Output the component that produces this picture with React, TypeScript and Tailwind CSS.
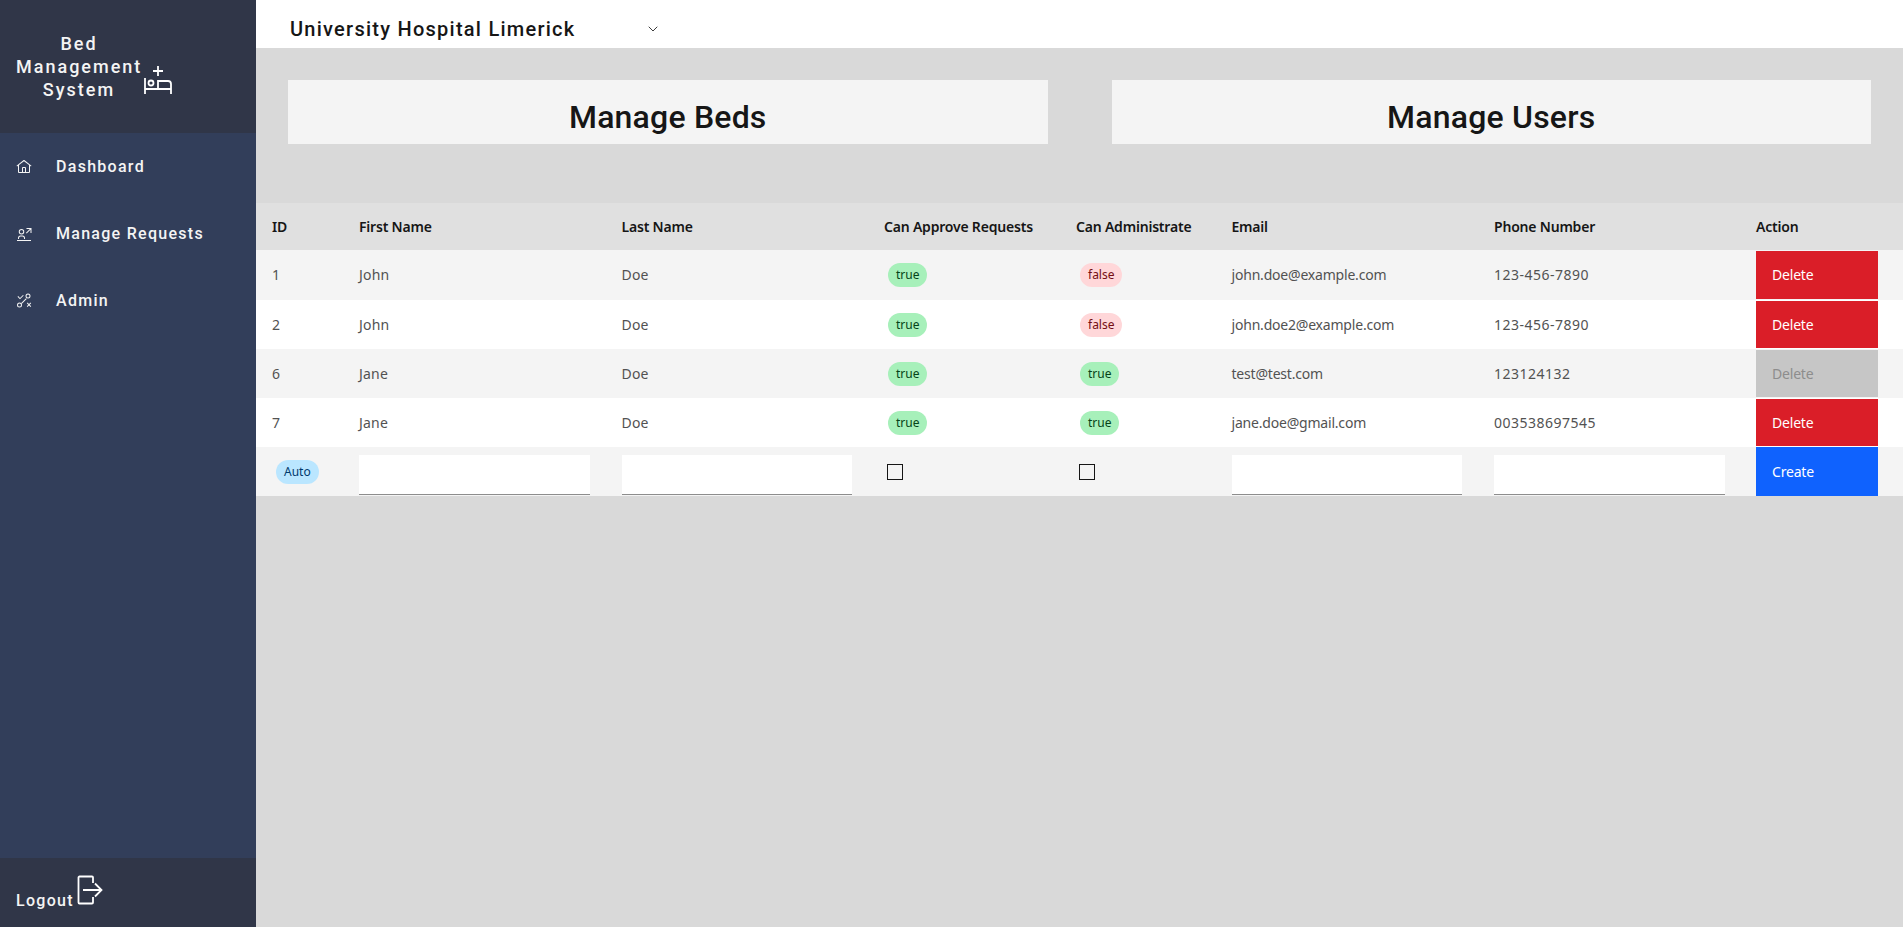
import { ChevronDown } from 'lucide-react';

type Person = {
    id: number;
    first: string;
    last: string;
    approve: boolean;
    admin: boolean;
    email: string;
    phone: string;
    locked?: boolean;
};

const people: Person[] = [
    { id: 1, first: 'John', last: 'Doe', approve: true, admin: false, email: 'john.doe@example.com', phone: '123-456-7890' },
    { id: 2, first: 'John', last: 'Doe', approve: true, admin: false, email: 'john.doe2@example.com', phone: '123-456-7890' },
    { id: 6, first: 'Jane', last: 'Doe', approve: true, admin: true, email: 'test@test.com', phone: '123124132', locked: true },
    { id: 7, first: 'Jane', last: 'Doe', approve: true, admin: true, email: 'jane.doe@gmail.com', phone: '003538697545' },
];

const headers = ['ID', 'First Name', 'Last Name', 'Can Approve Requests', 'Can Administrate', 'Email', 'Phone Number', 'Action'];

function HomeIcon() {
    return (
        <svg width="16" height="16" viewBox="0 0 32 32" fill="currentColor">
            <path d="M16.61 2.21a1 1 0 0 0-1.24 0L1 13.42 2.24 15 4 13.62V26a2 2 0 0 0 2 2h20a2 2 0 0 0 2-2V13.63L29.76 15 31 13.43zM18 26h-4v-8h4zm2 0v-8a2 2 0 0 0-2-2h-4a2 2 0 0 0-2 2v8H6V12.06l10-7.79 10 7.8V26z" />
        </svg>
    );
}

function RequestsIcon() {
    return (
        <svg width="16" height="16" viewBox="0 0 32 32" fill="currentColor">
            <path d="M2 28h28v2H2zM11 8a3.5 3.5 0 1 1-3.5 3.5A3.5 3.5 0 0 1 11 8m0-2a5.5 5.5 0 1 0 5.5 5.5A5.5 5.5 0 0 0 11 6zM4 26v-2a5 5 0 0 1 5-5h4a5 5 0 0 1 5 5v2h-2v-2a3 3 0 0 0-3-3H9a3 3 0 0 0-3 3v2zM21 4v2h6.6L20 13.6 21.4 15 29 7.4V14h2V4z" />
        </svg>
    );
}

function AdminIcon() {
    return (
        <svg width="16" height="16" viewBox="0 0 32 32" fill="currentColor">
            <path d="M24 3a3 3 0 1 1-3 3 3 3 0 0 1 3-3m0-2a5 5 0 1 0 5 5 5 5 0 0 0-5-5zM7 21a3 3 0 1 1-3 3 3 3 0 0 1 3-3m0-2a5 5 0 1 0 5 5 5 5 0 0 0-5-5zM8 12.6l-5-5L4.4 6.2 8 9.8l6-6 1.4 1.4zM30.4 20.4 29 19l-3 3-3-3-1.4 1.4 3 3-3 3L23 27.8l3-3 3 3 1.4-1.4-3-3zM10.4 20 20 10.4l1.4 1.4-9.6 9.6z" />
        </svg>
    );
}

function HospitalBedIcon() {
    return (
        <svg width="30" height="32" viewBox="0 0 30 32" fill="none" stroke="currentColor" strokeWidth="1.8">
            <path d="M15 2v10M10 7h10" />
            <path d="M2 14v16M2 25h26M28 30v-10a3 3 0 0 0-3-3H15v8" />
            <circle cx="8" cy="19" r="2.5" />
        </svg>
    );
}

function LogoutIcon() {
    return (
        <svg width="26" height="30" viewBox="0 0 26 30" fill="none" stroke="currentColor" strokeWidth="1.8">
            <path d="M16 8V2.5a1 1 0 0 0-1-1H2.5a1 1 0 0 0-1 1v25a1 1 0 0 0 1 1H15a1 1 0 0 0 1-1V22" />
            <path d="M6 15h18M18 8.5l6.5 6.5-6.5 6.5" />
        </svg>
    );
}

function Tag({ value, label }: { value: 'green' | 'red' | 'blue'; label: string }) {
    const tone =
        value === 'green'
            ? 'bg-[#a7f0ba] text-[#044317]'
            : value === 'red'
              ? 'bg-[#ffd7d9] text-[#750e13]'
              : 'bg-[#bae6ff] text-[#003a6d]';
    return (
        <span className={`ml-1 inline-flex h-6 items-center rounded-[15px] px-2 text-xs tracking-normal ${tone}`}>{label}</span>
    );
}

function TextInput() {
    return <input type="text" className="block h-10 w-[230.6px] border-b border-[#8d8d8d] bg-white outline-none" />;
}

function NavItem({ icon, label }: { icon: React.ReactNode; label: string }) {
    return (
        <a className="flex h-[67px] items-center pl-4 font-medium tracking-[1.28px] text-[#f4f4f4]">
            <span className="w-10 shrink-0">{icon}</span>
            {label}
        </a>
    );
}

export default function App() {
    return (
        <div className="flex h-screen overflow-hidden bg-[#d9d9d9] font-['Roboto',sans-serif]">
            {/* SIDEBAR */}
            <aside className="flex w-[256px] shrink-0 flex-col bg-[#323e5a] text-white">
                <div className="flex h-[133px] items-center bg-[#303648] pl-4">
                    <h1 className="w-[126px] text-center text-lg leading-[23px] font-medium tracking-[2px] text-[#f4f4f4]">
                        Bed Management System
                    </h1>
                    <span className="ml-px mt-[64px] self-start">
                        <HospitalBedIcon />
                    </span>
                </div>
                <nav className="flex-1">
                    <NavItem icon={<HomeIcon />} label="Dashboard" />
                    <NavItem icon={<RequestsIcon />} label="Manage Requests" />
                    <NavItem icon={<AdminIcon />} label="Admin" />
                </nav>
                <div className="flex h-[69px] bg-[#303648] pt-[17px] pl-4">
                    <span className="mt-[14px] font-medium tracking-[1.28px] text-[#f4f4f4]">Logout</span>
                    <span className="ml-[3px]">
                        <LogoutIcon />
                    </span>
                </div>
            </aside>

            <main className="min-w-0 flex-1">
                {/* HOSPITAL SELECT */}
                <div className="flex h-12 items-center bg-white pt-[9px] pl-[34px]">
                    <span className="w-[355px] text-xl font-medium tracking-[1.25px] text-[#161616]">University Hospital Limerick</span>
                    <ChevronDown className="h-4 w-4 text-[#161616]" strokeWidth={1.25} />
                </div>

                {/* CARDS */}
                <div className="grid grid-cols-2 gap-16 px-8 pt-8 pb-[59px]">
                    <div className="flex h-16 items-center justify-center bg-[#f4f4f4] pt-[10px] text-[32px] font-medium tracking-[0.2px] text-[#161616]">
                        Manage Beds
                    </div>
                    <div className="flex h-16 items-center justify-center bg-[#f4f4f4] pt-[10px] text-[32px] font-medium tracking-[0.2px] text-[#161616]">
                        Manage Users
                    </div>
                </div>

                {/* USERS TABLE */}
                <table className="w-full table-fixed border-collapse font-['Noto_Sans',sans-serif] text-sm tracking-[-0.2px]">
                    <colgroup>
                        <col className="w-[87px]" />
                        <col className="w-[262.5px]" />
                        <col className="w-[262.5px]" />
                        <col className="w-[192px]" />
                        <col className="w-[155.5px]" />
                        <col className="w-[262.5px]" />
                        <col className="w-[262px]" />
                        <col />
                    </colgroup>
                    <thead>
                        <tr className="h-[47px] bg-[#e0e0e0]">
                            {headers.map((h) => (
                                <th key={h} className="px-4 text-left font-semibold whitespace-nowrap text-[#161616]">
                                    {h}
                                </th>
                            ))}
                        </tr>
                    </thead>
                    <tbody className="text-[#525252]">
                        {people.map((p, i) => (
                            <tr key={p.id} className={`${i === 0 ? 'h-[50px]' : 'h-[49px]'} ${i % 2 === 0 ? 'bg-[#f4f4f4]' : 'bg-white'}`}>
                                <td className="px-4">{p.id}</td>
                                <td className="px-4 tracking-[0.2px]">{p.first}</td>
                                <td className="px-4 tracking-[0.2px]">{p.last}</td>
                                <td className="px-4">
                                    <Tag value={p.approve ? 'green' : 'red'} label={String(p.approve)} />
                                </td>
                                <td className="px-4">
                                    <Tag value={p.admin ? 'green' : 'red'} label={String(p.admin)} />
                                </td>
                                <td className="px-4 whitespace-nowrap">{p.email}</td>
                                <td className="px-4 tracking-[0.5px]">{p.phone}</td>
                                <td className="py-px pl-4">
                                    <button
                                        className={`block w-[122px] pl-4 text-left ${i === 0 ? 'h-[48px]' : 'h-[47px]'} ${p.locked ? 'bg-[#c6c6c6] text-[#8d8d8d]' : 'bg-[#da1e28] text-white'}`}
                                    >
                                        Delete
                                    </button>
                                </td>
                            </tr>
                        ))}
                        <tr className="h-[49px] bg-[#f4f4f4]">
                            <td className="px-4">
                                <Tag value="blue" label="Auto" />
                            </td>
                            <td className="px-4 pt-2 align-top">
                                <TextInput />
                            </td>
                            <td className="px-4 pt-2 align-top">
                                <TextInput />
                            </td>
                            <td className="px-4">
                                <span className="ml-[3px] block h-4 w-4 border border-[#161616]" />
                            </td>
                            <td className="px-4">
                                <span className="ml-[3px] block h-4 w-4 border border-[#161616]" />
                            </td>
                            <td className="px-4 pt-2 align-top">
                                <TextInput />
                            </td>
                            <td className="px-4 pt-2 align-top">
                                <TextInput />
                            </td>
                            <td className="pl-4">
                                <button className="block h-[49px] w-[122px] bg-[#0f62fe] pl-4 text-left text-white">Create</button>
                            </td>
                        </tr>
                    </tbody>
                </table>
            </main>
        </div>
    );
}
